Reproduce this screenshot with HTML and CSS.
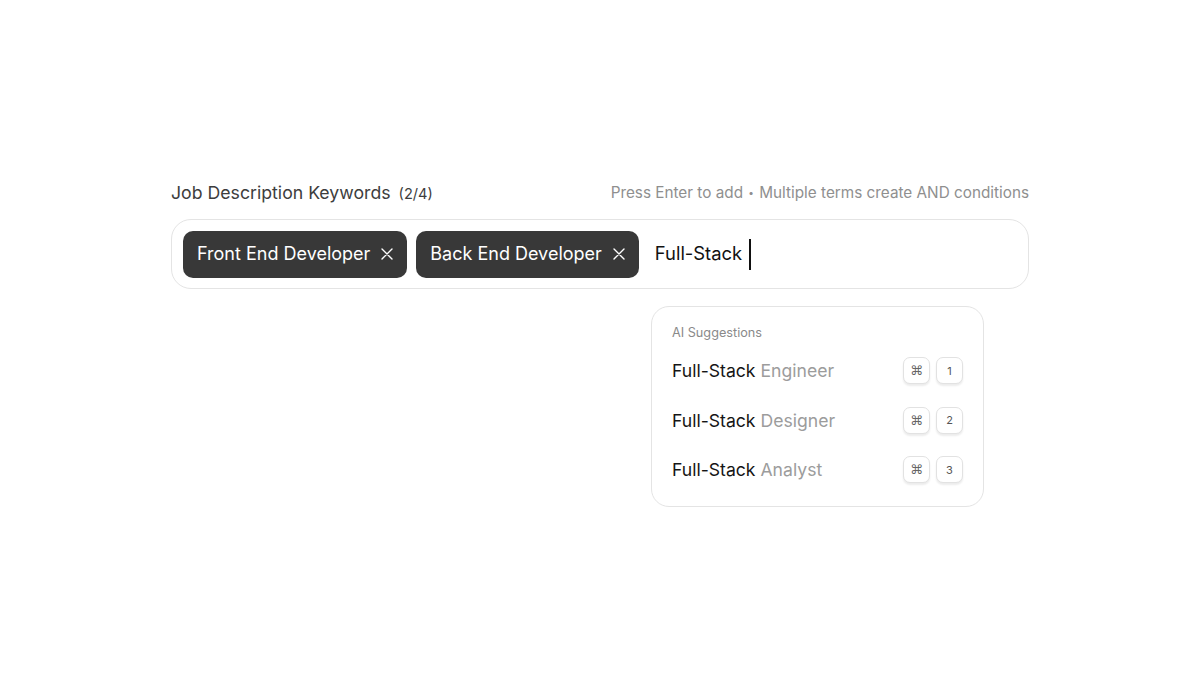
FILE: index.html
```html
<!DOCTYPE html>
<html lang="en">
<head>
    <meta charset="UTF-8">
    <meta name="viewport" content="width=device-width, initial-scale=1.0">
    <title>Job Description Keywords</title>
    <link rel="stylesheet" href="styles.css">
</head>
<body>
    <div class="keywords-field">
        <div class="field-header">
            <div class="field-title">
                <span class="title-text">Job Description Keywords</span>
                <span class="title-count">(2/4)</span>
            </div>
            <div class="field-hint">Press Enter to add <span class="dot">&bull;</span> Multiple terms create AND conditions</div>
        </div>

        <div class="tag-input">
            <div class="tag">
                <span>Front End Developer</span>
                <button type="button" class="tag-remove" aria-label="Remove">
                    <svg viewBox="0 0 12 12" width="12" height="12"><path d="M1 1L11 11M11 1L1 11" stroke="currentColor" stroke-width="1.4" stroke-linecap="round"/></svg>
                </button>
            </div>
            <div class="tag">
                <span>Back End Developer</span>
                <button type="button" class="tag-remove" aria-label="Remove">
                    <svg viewBox="0 0 12 12" width="12" height="12"><path d="M1 1L11 11M11 1L1 11" stroke="currentColor" stroke-width="1.4" stroke-linecap="round"/></svg>
                </button>
            </div>
            <div class="typed">Full-Stack<span class="caret"></span></div>
        </div>

        <div class="suggestions">
            <div class="suggestions-title">AI Suggestions</div>
            <div class="suggestion">
                <span class="suggestion-text">Full-Stack <span class="muted">Engineer</span></span>
                <span class="keys"><kbd class="cmd">&#8984;</kbd><kbd>1</kbd></span>
            </div>
            <div class="suggestion">
                <span class="suggestion-text">Full-Stack <span class="muted">Designer</span></span>
                <span class="keys"><kbd class="cmd">&#8984;</kbd><kbd>2</kbd></span>
            </div>
            <div class="suggestion">
                <span class="suggestion-text">Full-Stack <span class="muted">Analyst</span></span>
                <span class="keys"><kbd class="cmd">&#8984;</kbd><kbd>3</kbd></span>
            </div>
        </div>
    </div>
</body>
</html>
```

FILE: styles.css
```css
* {
    margin: 0;
    padding: 0;
    box-sizing: border-box;
    font-family: Inter, 'Noto Sans', 'Liberation Sans', sans-serif;
}

body {
    background: #fff;
    min-height: 100vh;
}

.keywords-field {
    position: relative;
    width: 858px;
    margin: 0 auto;
    padding-top: 180px;
}

.field-header {
    display: flex;
    justify-content: space-between;
    align-items: center;
    height: 24px;
    margin-bottom: 15px;
}

.field-title {
    display: flex;
    align-items: baseline;
    gap: 8px;
    color: #3d3d3d;
}

.title-text {
    font-size: 17.7px;
}

.title-count {
    font-size: 14.6px;
}

.field-hint {
    font-size: 15.3px;
    color: #8f8f8f;
}

.field-hint .dot {
    font-size: 10px;
    vertical-align: 2px;
    margin: 0 1px;
}

.tag-input {
    display: flex;
    align-items: center;
    gap: 9px;
    height: 70px;
    padding: 0 11px;
    border: 1px solid #e4e4e4;
    border-radius: 20px;
}

.tag {
    display: flex;
    align-items: center;
    gap: 11px;
    height: 47px;
    padding: 0 14px 1px;
    background: #383838;
    color: #fff;
    border-radius: 10px;
    font-size: 18px;
}

.tag-remove {
    display: flex;
    background: none;
    border: none;
    color: #fff;
    cursor: pointer;
}

.typed {
    display: flex;
    align-items: center;
    padding: 0 0 2px 7px;
    font-size: 18.4px;
    color: #111;
}

.caret {
    display: inline-block;
    width: 2px;
    height: 31px;
    margin-left: 7px;
    margin-top: 2px;
    background: #111;
}

.suggestions {
    position: absolute;
    top: 306px;
    left: 480px;
    width: 333px;
    padding: 18px 20px 11px;
    border: 1px solid #e4e4e4;
    border-radius: 18px;
    background: #fff;
}

.suggestions-title {
    font-size: 12.7px;
    line-height: 16px;
    color: #8a8a8a;
    margin-bottom: 5px;
}

.suggestion {
    display: flex;
    justify-content: space-between;
    align-items: center;
    height: 49.5px;
}

.suggestion-text {
    font-size: 17.6px;
    color: #151515;
}

.suggestion-text .muted {
    color: #9c9c9c;
}

.keys {
    display: flex;
    gap: 6px;
}

kbd {
    display: flex;
    align-items: center;
    justify-content: center;
    width: 27px;
    height: 27px;
    border: 1px solid #e2e2e2;
    border-radius: 7px;
    background: #fff;
    box-shadow: 0 2px 2px rgba(0, 0, 0, 0.08);
    font-family: Inter, sans-serif;
    font-size: 11px;
    color: #555;
}

kbd.cmd {
    font-family: 'DejaVu Sans', sans-serif;
    font-size: 13px;
    color: #666;
}
```
